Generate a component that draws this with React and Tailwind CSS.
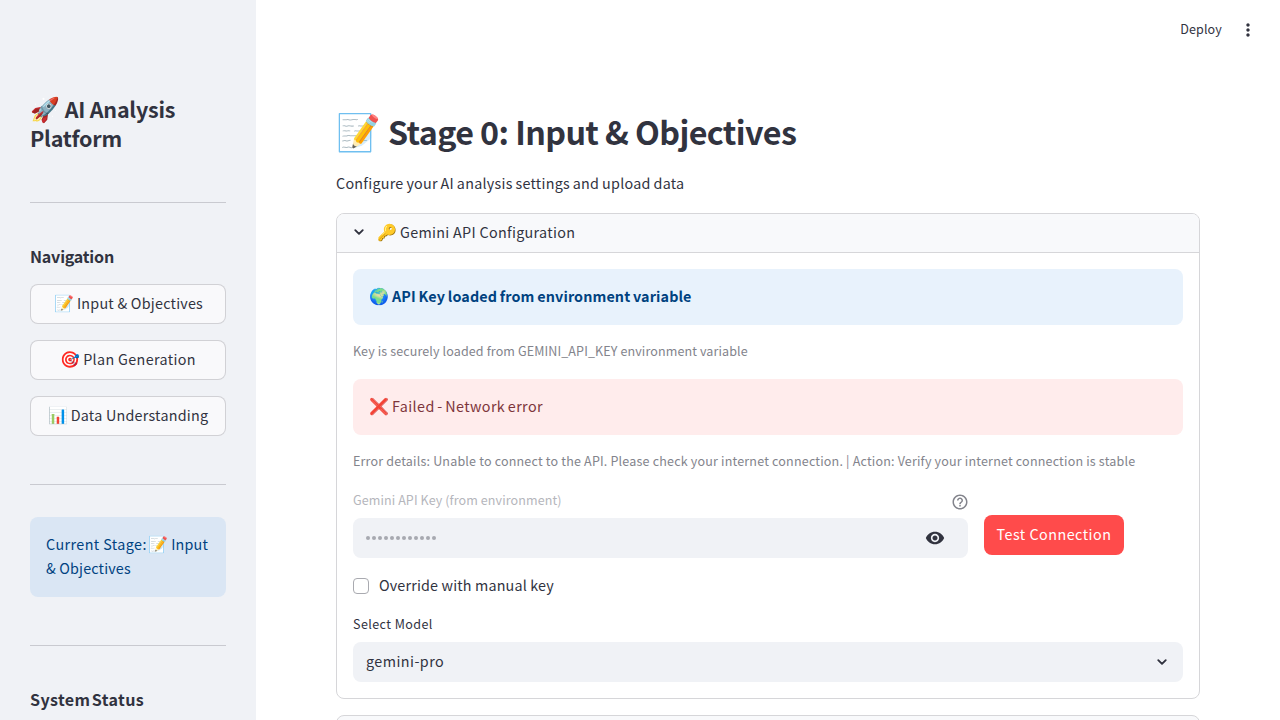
import { ChevronDown } from "lucide-react";
import { MdVisibility, MdMoreVert, MdHelpOutline } from "react-icons/md";

function Emoji({ children, className = "" }) {
  return <span className={`font-normal leading-none ${className}`}>{children}</span>;
}

function NavButton({ icon, label, className = "" }) {
  return (
    <button className={`flex h-10 w-full items-center justify-center gap-[3px] whitespace-nowrap rounded-lg border border-[#31333f]/20 bg-[#f9f9fb] pb-0.5 text-[14.34px] leading-6 ${className}`}>
      <Emoji className="pb-[2px] text-[16px] tracking-normal">{icon}</Emoji>
      <span>{label}</span>
    </button>
  );
}

function Divider({ className = "" }) {
  return <hr className={`border-t border-[#c9cad0] ${className}`} />;
}

function Sidebar() {
  return (
    <aside className="h-[720px] w-64 shrink-0 overflow-hidden bg-[#f0f2f6] px-[30px] pt-[94px]">
      <h2 className="text-[21.5px] font-semibold leading-[29px] tracking-[-0.22px]">
        <Emoji className="text-[24px] tracking-normal">🚀</Emoji> AI Analysis
        <br />
        Platform
      </h2>
      <Divider className="mt-[50px]" />
      <h3 className="mt-[41px] text-[16.1px] font-semibold leading-[24px] tracking-[-0.23px]">Navigation</h3>
      <nav className="mt-4 flex flex-col gap-4">
        <NavButton icon="📝" label="Input & Objectives" className="pl-px tracking-[0.23px]" />
        <NavButton icon="🎯" label="Plan Generation" className="tracking-[0.35px]" />
        <NavButton icon="📊" label="Data Understanding" className="tracking-[0.24px]" />
      </nav>
      <Divider className="mt-12" />
      <div className="mt-8 h-20 whitespace-nowrap rounded-lg bg-[#dae6f4] px-4 pt-[15px] text-[14.34px] leading-6 tracking-[0.16px] text-[#004280]">
        <span className="tracking-[0.42px]">Current Stage:</span>
        <Emoji className="ml-px text-[16px] tracking-normal">📝</Emoji> Input
        <br />
        &amp; Objectives
      </div>
      <Divider className="mt-12" />
      <h3 className="mt-[41px] whitespace-nowrap text-[16.1px] font-semibold leading-[24px] tracking-[0.35px] [word-spacing:-2.5px]">
        System Status
      </h3>
    </aside>
  );
}

function Alert({ icon, tone, children }) {
  return (
    <div className={`flex h-14 items-center gap-[3px] rounded-lg px-4 pb-0.5 text-[14.34px] leading-6 ${tone}`}>
      <Emoji className="pb-[2px] text-[16px] tracking-normal">{icon}</Emoji>
      <span>{children}</span>
    </div>
  );
}

export default function App() {
  return (
    <div className="flex h-[720px] w-[1280px] overflow-hidden bg-white font-['Noto_Sans_CJK_SC',sans-serif] text-[#31333f]">
      <Sidebar />
      <div className="flex min-w-0 flex-1 flex-col">
        <header className="flex h-[60px] shrink-0 items-center justify-end pr-[22px]">
          <span className="pb-0.5 text-[12.54px] leading-5 tracking-[0.15px]">Deploy</span>
          <MdMoreVert className="ml-4 size-5" />
        </header>
        <main className="px-20 pt-[50px]">
          <h1 className="flex h-[43px] items-center gap-[7px] whitespace-nowrap text-[32.25px] font-semibold leading-[43px] tracking-[-0.6px]">
            <Emoji className="pb-[6px] text-[36px] tracking-normal">📝</Emoji>
            <span>Stage 0: Input &amp; Objectives</span>
          </h1>
          <p className="mt-[18px] text-[14.34px] leading-6 tracking-[0.25px] [word-spacing:-0.6px]">
            Configure your AI analysis settings and upload data
          </p>
          <section className="mt-[18px] h-[486px] overflow-hidden rounded-lg border border-[#d6d6d9]">
            <div className="flex h-[39px] items-center border-b border-[#d6d6d9] bg-[#f8f9fb] pl-4 text-[14.34px] leading-6">
              <ChevronDown className="mb-[2px] size-3 scale-125" strokeWidth={3} />
              <Emoji className="ml-3 pb-[4px] text-[16px]">🔑</Emoji>
              <span className="ml-[3px] pb-0.5 tracking-[0.31px]">Gemini API Configuration</span>
            </div>
            <div className="px-4 pt-4">
              <Alert icon="🌍" tone="bg-[#e8f2fc] text-[#004280] font-semibold tracking-[0.12px] [word-spacing:-0.6px]">
                API Key loaded from environment variable
              </Alert>
              <p className="mt-[15px] text-[12.54px] leading-[22px] tracking-[0.11px] text-[#83848c]">
                Key is securely loaded from GEMINI_API_KEY environment variable
              </p>
              <Alert icon="❌" tone="mt-[17px] bg-[#ffecec] text-[#7d353b] tracking-[0.4px] [word-spacing:-1px]">
                Failed - Network error
              </Alert>
              <p className="mt-[15px] whitespace-nowrap text-[12.54px] leading-[22px] tracking-[0.18px] text-[#83848c]">
                Error details: Unable to connect to the API. Please check your internet connection. | Action: Verify your internet connection is stable
              </p>
              <div className="mt-[17px] flex gap-4">
                <div className="w-[615px]">
                  <div className="flex h-[29px] items-start justify-between text-[12.54px] leading-[21px] text-[#b5b6bc]">
                    <span className="tracking-[0.09px]">Gemini API Key (from environment)</span>
                    <MdHelpOutline className="-mr-px mt-[4px] size-[18px] text-[#83848c]" />
                  </div>
                  <div className="flex h-10 items-center justify-between rounded-lg bg-[#f0f2f6] pl-[13.4px] pr-[23px]">
                    <div className="flex gap-[2px]">
                      {Array.from({ length: 12 }, (_, i) => (
                        <span key={i} className="size-1 rounded-full bg-[#a7a9b0]" />
                      ))}
                    </div>
                    <MdVisibility className="size-5" />
                  </div>
                </div>
                <button className="mt-[26px] h-10 w-[140px] whitespace-nowrap rounded-lg bg-[#ff4b4b] pb-0.5 text-[14.34px] leading-6 tracking-[0.48px] text-white">
                  Test Connection
                </button>
              </div>
              <label className="mt-4 flex h-6 items-center gap-[10px] text-[14.34px] leading-6 tracking-[0.16px]">
                <span className="size-4 rounded-[4px] border border-[#a9aab0]" />
                <span className="pb-0.5">Override with manual key</span>
              </label>
              <div className="mt-[15px] text-[12.54px] leading-[21px] tracking-[0.42px]">Select Model</div>
              <div className="mt-2 flex h-10 items-center justify-between rounded-lg bg-[#f0f2f6] pl-[13px] pr-[15px] text-[14.34px] leading-6">
                <span className="pb-0.5 tracking-[0.45px]">gemini-pro</span>
                <ChevronDown className="size-3 scale-125" strokeWidth={3} />
              </div>
            </div>
          </section>
          <section className="mt-4 h-12 rounded-t-lg border border-[#d6d6d9] bg-[#f8f9fb]" />
        </main>
      </div>
    </div>
  );
}
